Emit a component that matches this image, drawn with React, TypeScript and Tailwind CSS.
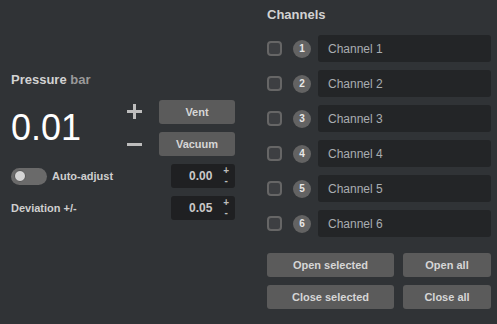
import React from 'react';

const channels = [1, 2, 3, 4, 5, 6];

function SpinInput({ value }: { value: string }) {
  return (
    <div className="flex h-6 w-16 items-center justify-between rounded-[3px] bg-[#1f2022] pl-[18px] pr-[6px]">
      <span className="text-[12px] font-bold text-[#c9c9c9]">{value}</span>
      <div className="flex flex-col items-center text-[10px] font-bold leading-[10px] text-[#bdbdbd]">
        <span>+</span>
        <span>-</span>
      </div>
    </div>
  );
}

function GrayButton({ label, className }: { label: string; className: string }) {
  return (
    <button className={`h-6 rounded-[3px] bg-[#5b5b5b] text-[11px] font-bold text-[#d6d6d6] ${className}`}>
      {label}
    </button>
  );
}

export default function App() {
  return (
    <div
      className="flex h-[324px] w-[497px] bg-[#303336] text-white"
      style={{ fontFamily: '"Liberation Sans", Arial, sans-serif' }}
    >
      {/* left: pressure */}
      <div className="flex w-[235px] flex-col pl-[11px] pt-[72px]">
        <div className="text-[13px] font-bold leading-4 text-[#d2d2d2]">
          Pressure <span className="text-[#9a9a9a]">bar</span>
        </div>

        <div className="mt-[12px] flex items-center">
          <div className="w-[116px] text-[36px] font-light leading-none text-white">0.01</div>
          <div className="flex flex-col gap-[18px]">
            <svg width="15" height="15" viewBox="0 0 15 15">
              <path d="M7.5 0v15M0 7.5h15" stroke="#bdbdbd" strokeWidth="3" />
            </svg>
            <svg width="15" height="15" viewBox="0 0 15 15">
              <path d="M0 7.5h15" stroke="#bdbdbd" strokeWidth="3" />
            </svg>
          </div>
          <div className="ml-[17px] flex flex-col gap-2">
            <GrayButton label="Vent" className="w-[76px]" />
            <GrayButton label="Vacuum" className="w-[76px]" />
          </div>
        </div>

        <div className="mt-2 flex items-center justify-between">
          <div className="flex items-center gap-[5px]">
            <div className="flex h-[17px] w-9 items-center rounded-full bg-[#6a6a6a] pl-[3px]">
              <div className="h-[12px] w-[12px] rounded-full border border-[#555] bg-[#d4d4d4]" />
            </div>
            <span className="text-[11px] font-bold text-[#cfcfcf]">Auto-adjust</span>
          </div>
          <SpinInput value="0.00" />
        </div>

        <div className="mt-2 flex items-center justify-between">
          <span className="text-[11px] font-bold text-[#cfcfcf]">Deviation +/-</span>
          <SpinInput value="0.05" />
        </div>
      </div>

      {/* right: channels */}
      <div className="ml-[32px] flex w-[224px] flex-col pt-[7px]">
        <div className="text-[13px] font-bold leading-4 text-[#d2d2d2]">Channels</div>
        <div className="mt-3 flex flex-col gap-2">
          {channels.map((n) => (
            <div key={n} className="flex h-[27px] items-center">
              <div className="h-[15px] w-[15px] rounded-[4px] border-2 border-[#666] bg-[#3d3f42]" />
              <div className="ml-[11px] flex h-[18px] w-[18px] items-center justify-center rounded-full bg-[#636363] text-[10px] font-bold text-[#e8e8e8]">
                {n}
              </div>
              <div className="ml-[7px] flex h-[27px] flex-1 items-center rounded-[3px] bg-[#232527] pl-[10px] text-[12px] text-[#a9adb1]">
                Channel {n}
              </div>
            </div>
          ))}
        </div>
        <div className="mt-4 grid grid-cols-[127px_88px] gap-x-[9px] gap-y-2">
          <GrayButton label="Open selected" className="" />
          <GrayButton label="Open all" className="" />
          <GrayButton label="Close selected" className="" />
          <GrayButton label="Close all" className="" />
        </div>
      </div>
    </div>
  );
}
